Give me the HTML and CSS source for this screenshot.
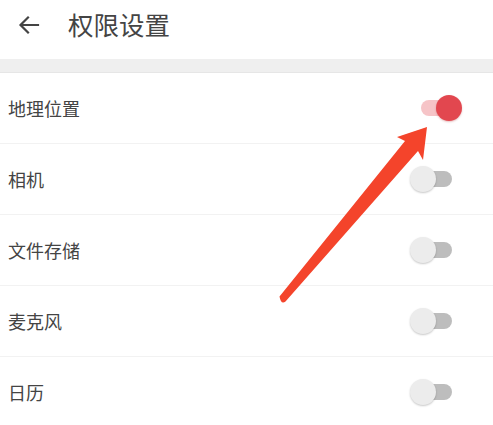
FILE: index.html
```html
<!DOCTYPE html>
<html lang="zh">
<head>
<meta charset="utf-8">
<link rel="stylesheet" href="styles.css">
</head>
<body>
<div class="page">
  <header class="topbar">
    <svg class="back" width="22" height="20" viewBox="0 0 22 20"><path d="M20 10H3M10 2.5L2.5 10L10 17.5" fill="none" stroke="#444" stroke-width="2.2" stroke-linecap="square"/></svg>
    <h1 class="title">权限设置</h1>
  </header>
  <div class="band"></div>
  <ul class="list">
    <li class="row"><span class="label">地理位置</span><span class="switch on"><span class="track"></span><span class="thumb"></span></span></li>
    <li class="row"><span class="label">相机</span><span class="switch"><span class="track"></span><span class="thumb"></span></span></li>
    <li class="row"><span class="label">文件存储</span><span class="switch"><span class="track"></span><span class="thumb"></span></span></li>
    <li class="row"><span class="label">麦克风</span><span class="switch"><span class="track"></span><span class="thumb"></span></span></li>
    <li class="row"><span class="label">日历</span><span class="switch"><span class="track"></span><span class="thumb"></span></span></li>
  </ul>
  <svg class="arrow" width="493" height="425" viewBox="0 0 493 425"><path d="M279.5 296.5 L405 141 L397 137 L427 127 L423 160 L418 151 L285.5 301.5 Q281 305 279.5 296.5 Z" fill="#f4442b"/></svg>
</div>
</body>
</html>
```

FILE: styles.css
```css
html, body { margin: 0; padding: 0; background: #fff; }
body { font-family: "Noto Sans CJK SC", "Noto Sans", sans-serif; color: #444; }
.page { position: relative; width: 493px; height: 425px; overflow: hidden; }
.topbar { height: 59px; display: flex; align-items: center; padding-left: 18px; box-sizing: border-box; }
.back { display: block; margin-top: -10px; }
.title { margin: -11px 0 0 28px; font-size: 25.5px; font-weight: 400; color: #444; line-height: 1; }
.band { height: 13px; background: #efefef; border-bottom: 1px solid #e6e6e6; }
.list { list-style: none; margin: 0; padding: 0; }
.row { height: 70px; display: flex; align-items: center; justify-content: space-between; padding: 0 0 0 8px; border-bottom: 1px solid #f2f2f2; }
.label { font-size: 18px; color: #444; margin-top: -1px; }
.switch { position: relative; width: 42px; height: 28px; margin-right: 41px; }
.track { position: absolute; left: 11px; top: 6px; width: 31px; height: 16px; border-radius: 8px; background: #bdbdbd; }
.thumb { position: absolute; left: 0; top: 1px; width: 26px; height: 26px; border-radius: 50%; background: #ececec; box-shadow: 0 1px 2px rgba(0,0,0,0.22); }
.switch.on .track { left: 11px; width: 28px; background: #f6c4c7; }
.switch.on .thumb { left: 26px; background: #e2474f; box-shadow: 0 1px 2px rgba(150,0,0,0.25); }
.arrow { position: absolute; left: 0; top: 0; pointer-events: none; }
```
